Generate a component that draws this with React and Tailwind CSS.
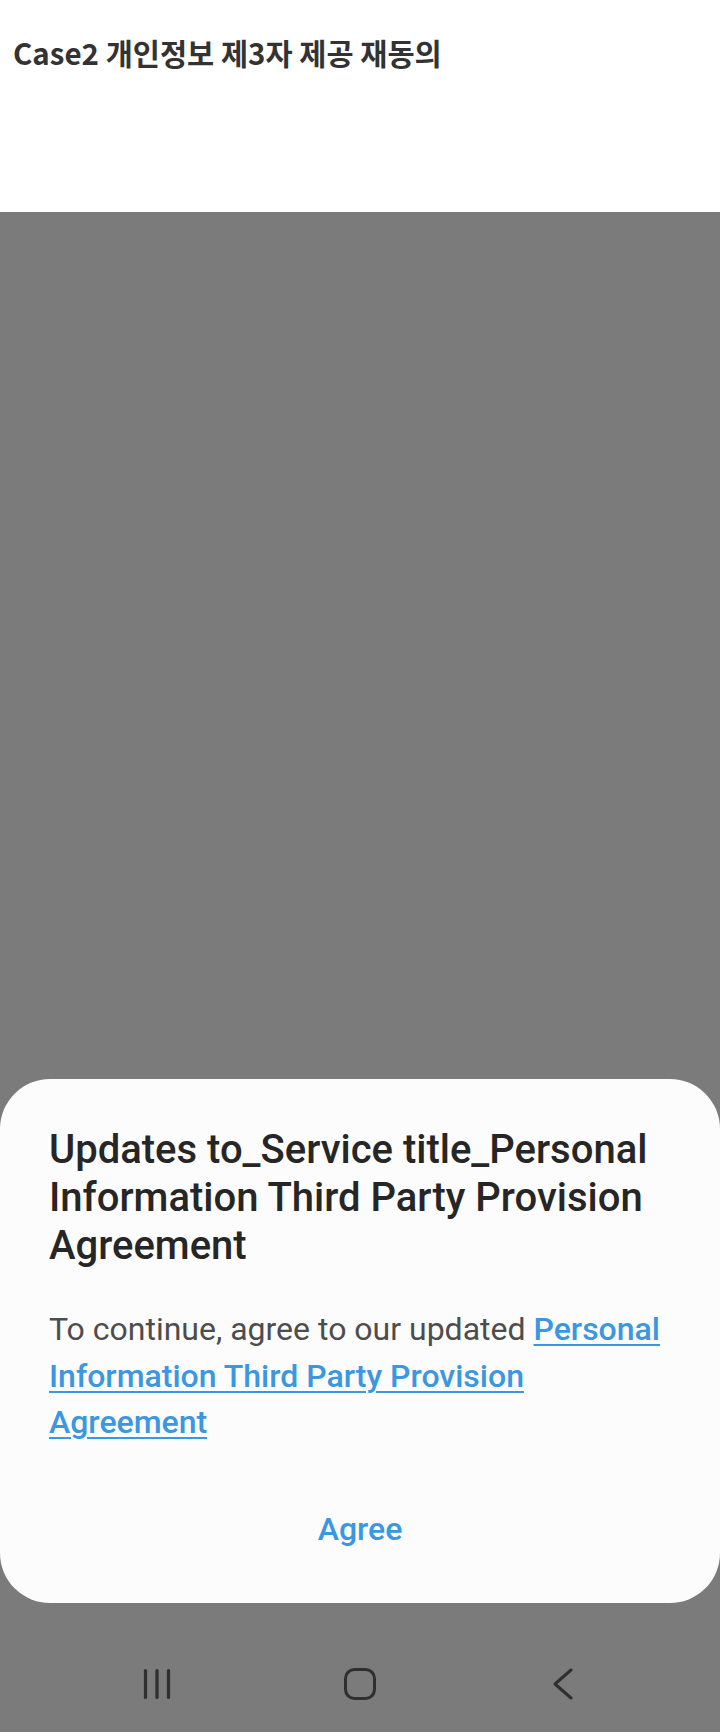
import React from "react";

export default function App() {
  return (
    <div className="w-[720px] h-[1732px] flex flex-col bg-[#7b7b7b] overflow-hidden">
      {/* page header (behind the dim) */}
      <div className="h-[212px] bg-white pl-[13px] pt-[34px]">
        <h1 className="text-[29.5px] leading-[36px] font-semibold text-[#333333] [font-family:'Noto_Sans_CJK_KR','Noto_Sans',sans-serif]">
          Case2 개인정보 제3자 제공 재동의
        </h1>
      </div>

      {/* dim area + dialog */}
      <div className="flex-1 flex flex-col justify-end">
        <div className="bg-[#fcfcfc] rounded-[50px] pt-[47px] pb-[51px] px-[49px] [font-family:Roboto,'Noto_Sans',sans-serif]">
          <h2 className="text-[40px] leading-[48px] font-medium text-[#262626] pr-[8px]">
            Updates to_Service title_Personal Information Third Party Provision Agreement
          </h2>
          <p className="mt-[36px] text-[32px] leading-[46.5px] text-[#4d4d4d]">
            To continue, agree to our updated{" "}
            <a className="text-[#3a97e0] font-medium underline decoration-2 underline-offset-[4px]">
              Personal Information Third Party Provision Agreement
            </a>
          </p>
          <div className="mt-[60px] flex justify-center">
            <button className="text-[32px] leading-[46.5px] font-medium text-[#3a97e0]">
              Agree
            </button>
          </div>
        </div>
      </div>

      {/* navigation bar */}
      <div className="h-[129px] pt-[65px] flex justify-center gap-[123px]">
        <div className="w-[80px] h-[32px] flex justify-center">
          <svg width="32" height="32" viewBox="0 0 32 32" fill="none" stroke="#2f2f2f" strokeWidth="3.2" strokeLinecap="round">
            <line x1="4.5" y1="2.5" x2="4.5" y2="29.5" />
            <line x1="16" y1="2.5" x2="16" y2="29.5" />
            <line x1="27.5" y1="2.5" x2="27.5" y2="29.5" />
          </svg>
        </div>
        <div className="w-[80px] h-[32px] flex justify-center">
          <svg width="32" height="32" viewBox="0 0 32 32" fill="none" stroke="#2f2f2f" strokeWidth="3">
            <rect x="1.5" y="1.5" width="29" height="29" rx="9" />
          </svg>
        </div>
        <div className="w-[80px] h-[32px] flex justify-center">
          <svg width="32" height="32" viewBox="0 0 32 32" fill="none" stroke="#2f2f2f" strokeWidth="3" strokeLinecap="round" strokeLinejoin="round">
            <polyline points="24,2 8,16 24,30" />
          </svg>
        </div>
      </div>
    </div>
  );
}
